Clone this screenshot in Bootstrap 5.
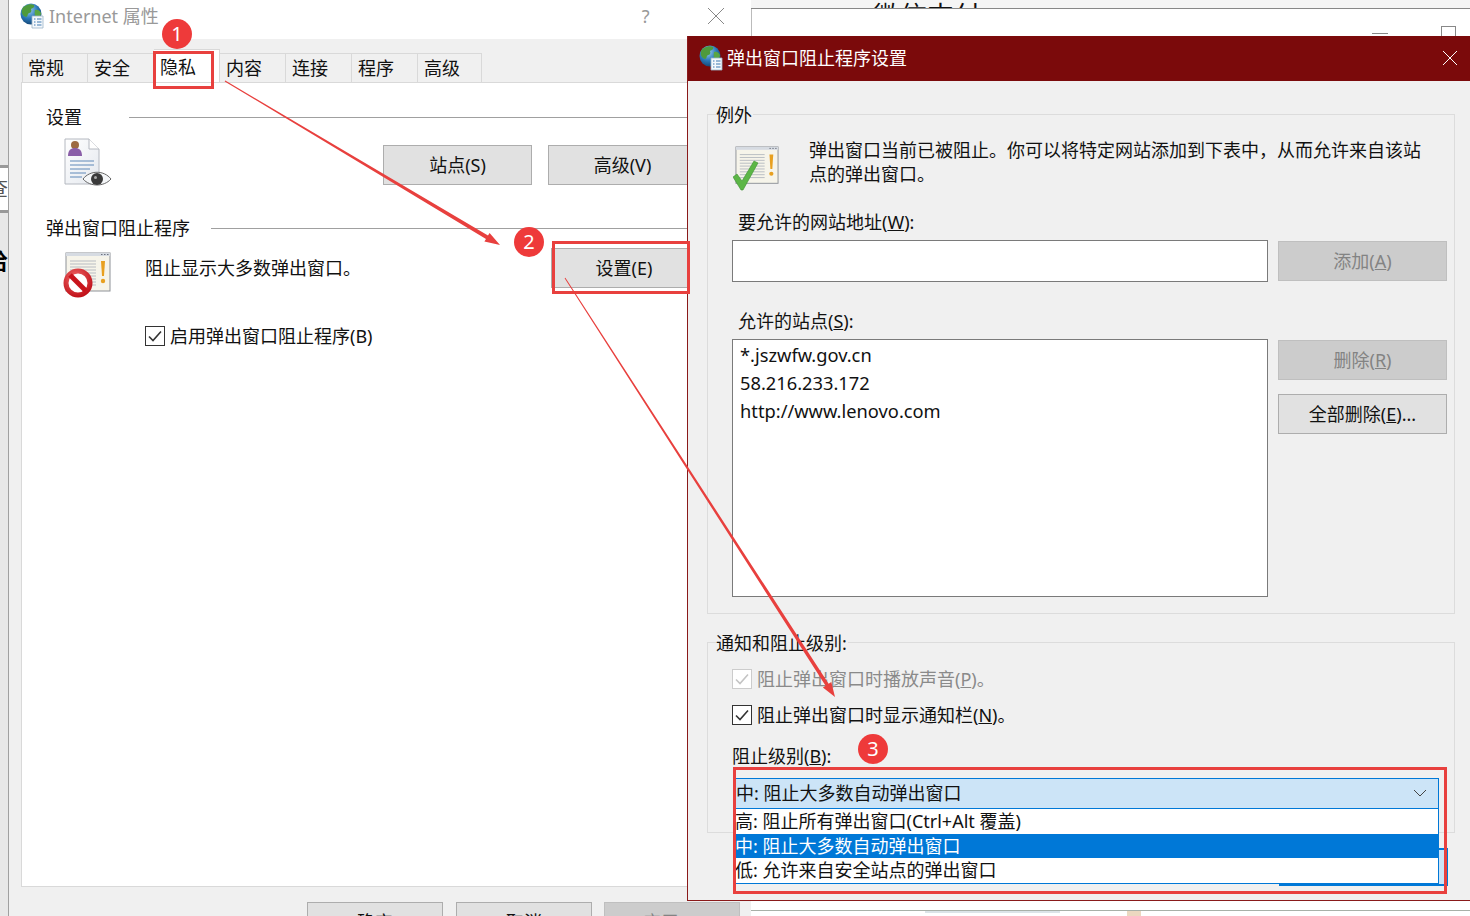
<!DOCTYPE html>
<html lang="zh-CN">
<head>
    <meta charset="UTF-8">
    <meta name="viewport" content="width=device-width, initial-scale=1.0">
    <title>Internet 属性</title>
    <link href="https://cdn.jsdelivr.net/npm/bootstrap@5.3.2/dist/css/bootstrap.min.css" rel="stylesheet">
    <style>
        html, body { height: 916px; overflow: hidden; }
        body { background: #fff; color: #111; font-family: "Noto Sans", "Noto Sans CJK SC", sans-serif; font-size: 18px; line-height: 24px; position: relative; width: 1470px; }

        /* what is behind the two dialogs */
        .back-left { position: absolute; left: 0; top: 0; width: 9px; height: 916px; background: #e8e8e8; border-right: 1px solid #a0a0a0; overflow: hidden; }
        .back-white { height: 48px; margin-top: 165px; background: #fff; border-top: 3px solid #999; border-bottom: 3px solid #999; font-size: 20px; padding-top: 9px; text-indent: -12px; white-space: nowrap; color: #555; }
        .back-bold { margin-top: 35px; font-size: 22px; font-weight: 700; text-indent: -14px; white-space: nowrap; color: #000; }
        .back-top { position: absolute; left: 751px; top: 0; right: 0; height: 9px; background: #f5f5f5; border-bottom: 1px solid #888; overflow: hidden; font-size: 27px; line-height: 27px; padding: 2px 0 0 122px; }
        .back-side { position: absolute; left: 751px; top: 9px; width: 1px; height: 30px; background: #bbb; }
        .back-min { position: absolute; left: 1372px; top: 33px; width: 16px; height: 1px; background: #888; }
        .back-max { position: absolute; left: 1441px; top: 26px; width: 15px; height: 11px; border: 1px solid #888; border-bottom: 0; }
        .back-foot { position: absolute; left: 751px; right: 0; top: 910px; height: 1px; background: #a8b0a8; }
        .back-blur { position: absolute; left: 925px; top: 911px; width: 135px; height: 2px; background: #dbe4e8; }
        .back-pic { position: absolute; left: 1127px; top: 911px; width: 14px; height: 5px; background: #ecd8c0; }

        /* Internet 属性 */
        .win-main { position: absolute; left: 9px; top: 0; width: 742px; height: 916px; background: #f0f0f0; overflow: hidden; }
        .main-title { height: 39px; background: #fff; padding: 0 0 7px 11px; color: #999; }
        .main-title .title-name { padding-left: 1px; }
        .main-title .help-mark { margin-left: 483px; width: 22px; color: #999; }
        .main-title .title-x { margin-left: 43px; }
        .main-tabs { margin: 14px 0 0 13px; border: 0; flex-wrap: nowrap; }
        .main-tabs .nav-link { width: 66px; height: 29px; margin: 0; padding: 2px 0 0 6px; color: #111; font-size: 18px; line-height: 24px; background: #f0f0f0; border: 1px solid #d9d9d9; border-bottom: 0; border-left-width: 0; border-radius: 0; }
        .main-tabs .nav-item:first-child .nav-link { border-left-width: 1px; padding-left: 5px; }
        .main-tabs .nav-item:last-child .nav-link { width: 64px; }
        .main-tabs .nav-link.active { width: 66px; height: 33px; margin-top: -4px; padding-top: 5px; background: #fff; color: #111; border-color: #d9d9d9; position: relative; z-index: 1; }
        .main-panel { height: 805px; margin: 0 11px 0 12px; background: #fff; border: 1px solid #d9d9d9; padding: 22px 0 0 24px; }
        .head-line { height: 24px; }
        .head-line .rule-line { flex: 1; height: 1px; background: #a0a0a0; }
        .head-a { margin-right: 47px; }
        .head-b { margin-right: 21px; }
        .main-row-a { height: 87px; padding-right: 42px; }
        .main-row-a .row-btns { margin-top: 16px; gap: 16px; }
        .main-row-a svg, .main-row-b svg { flex: none; }
        .icon-person { margin: 9px 0 0 18px; }
        .main-row-b { height: 65px; padding-right: 42px; margin-top: 8px; }
        .icon-stop { margin: 4px 0 0 17px; }
        .block-text { margin: 8px 0 0 34px; }
        .enable-row { margin: 13px 0 0 99px; }
        .win-btn { width: 149px; height: 40px; padding: 0; border: 1px solid #adadad; border-radius: 0; background: #e1e1e1; color: #111; font-size: 18px; line-height: 24px; }
        .win-btn.btn-narrow { width: 146px; }
        .win-btn.btn-off, .win-btn.btn-off:disabled { background: #cccccc; border-color: #bfbfbf; color: #838383; opacity: 1; }
        .main-foot { margin: 15px 0 0 298px; gap: 13px; }
        .main-foot .win-btn { width: 136px; flex: none; }
        .main-foot .win-btn.btn-off { margin-left: -1px; }

        .win-check { margin: 0 !important; width: 20px; height: 20px; flex: none; border: 1px solid #333; border-radius: 0 !important; background-color: #fff; }
        .win-check:checked { background-color: #fff; border-color: #333; background-size: 18px; background-image: url("data:image/svg+xml,%3csvg xmlns='http://www.w3.org/2000/svg' viewBox='0 0 18 18'%3e%3cpath fill='none' stroke='%23333' stroke-width='1.6' d='M3 9.5l4 4 8-9'/%3e%3c/svg%3e"); }
        .win-check:disabled { opacity: 1; border-color: #ccc; }
        .win-check.check-off:checked { border-color: #ccc; background-image: url("data:image/svg+xml,%3csvg xmlns='http://www.w3.org/2000/svg' viewBox='0 0 18 18'%3e%3cpath fill='none' stroke='%23c4c4c4' stroke-width='1.6' d='M3 9.5l4 4 8-9'/%3e%3c/svg%3e"); }

        /* 弹出窗口阻止程序设置 */
        .win-popup { position: absolute; left: 687px; top: 36px; width: 783px; height: 865px; background: #f0f0f0; border-left: 1px solid #8a1a1a; border-bottom: 1px solid #8a1a1a; overflow: hidden; }
        .popup-title { height: 45px; background: #7b0a0b; color: #fff; padding: 0 0 1px 11px; }
        .popup-title .title-x { margin-left: auto; margin-right: 12px; }
        .group-box { width: 748px; margin-left: 19px; border: 1px solid #dcdcdc; padding-left: 24px; position: relative; }
        .group-one { height: 500px; margin-top: 33px; }
        .group-two { height: 191px; margin-top: 28px; }
        .group-name { background: #f0f0f0; width: fit-content; margin: -13px 0 0 -16px; padding: 0 1px 0 0; height: 26px; line-height: 26px; }
        .allow-info { margin: 10px 0 0 1px; height: 60px; }
        .allow-icon { flex: none; margin-top: 8px; }
        .allow-info .allow-text { width: 620px; margin-left: 30px; }
        .sub-label { padding-left: 6px; height: 24px; }
        .label-first { margin-top: 12px; }
        .label-second { margin-top: 27px; }
        .box-row { gap: 10px; margin-top: 6px; }
        .entry-box { height: 42px; width: 536px; flex: none; border: 1px solid #7a7a7a; border-radius: 0; }
        .sites-box { height: 258px; width: 536px; flex: none; border: 1px solid #7a7a7a; background: #fff; padding: 1px 7px; font-size: 18.3px; line-height: 28px; }
        .side-btns { width: 169px; }
        .side-btns .win-btn { width: 169px; display: block; }
        .side-btns .side-first { margin-top: 1px; }
        .side-btns .side-next { margin-top: 14px; }
        .check-row { height: 20px; gap: 5px; }
        .check-row.text-off { color: #8a8a8a; }
        .check-one { margin-top: 13px; }
        .check-two { margin-top: 16px; }
        .level-label { margin-top: 19px; height: 24px; }
        .level-box { position: absolute; left: 27px; top: 135px; width: 704px; height: 32px; background: #cce4f7; border: 1px solid #0078d7; border-bottom-width: 2px; line-height: 29px; }
        .level-box svg { position: absolute; right: 11px; top: 10px; }
        .level-menu { position: absolute; left: 27px; top: 166px; width: 704px; height: 75px; min-width: 0; margin: 0; padding: 0; border: 1px solid #0078d7; border-top: 0; border-radius: 0; background: #fff; z-index: 3; }
        .level-menu .dropdown-item { height: 24.5px; padding: 0; line-height: 24px; color: #111; font-size: 18px; text-indent: -1px; }
        .level-menu .dropdown-item.active { background: #0078d7; color: #fff; }
        .ok-btn { display: block; width: 169px; height: 38px; margin: 15px 0 0 591px; background: #cce4f7; border: 2px solid #0078d7; border-radius: 0; padding: 0; }

        /* annotations */
        .mark-layer { position: absolute; left: 0; top: 0; z-index: 5; pointer-events: none; }
        .step-dot { position: absolute; z-index: 6; width: 30px; height: 30px; background: #ee3a3a; color: #fff; font-size: 20px; line-height: 29px; text-align: center; }
        .step-a { left: 162px; top: 19px; }
        .step-b { left: 514px; top: 227px; }
        .step-c { left: 858px; top: 734px; }
    </style>
</head>
<body>
    <svg width="0" height="0" class="position-absolute">
        <defs>
            <radialGradient id="globeFill" cx="40%" cy="30%" r="75%">
                <stop offset="0" stop-color="#9fd0f2"/>
                <stop offset=".55" stop-color="#2a78b8"/>
                <stop offset="1" stop-color="#12406e"/>
            </radialGradient>
            <linearGradient id="pageFill" x1="0" y1="0" x2="1" y2="1">
                <stop offset="0" stop-color="#ffffff"/>
                <stop offset="1" stop-color="#e4e8ee"/>
            </linearGradient>
            <radialGradient id="stopFill" cx="40%" cy="30%" r="80%">
                <stop offset="0" stop-color="#f26a6a"/>
                <stop offset="1" stop-color="#c01018"/>
            </radialGradient>
            <symbol id="globeIcon" viewBox="0 0 24 26">
                <circle cx="11" cy="11" r="10.5" fill="url(#globeFill)"/>
                <path d="M5 3c3-2 7-2 9-1 1 2-1 3-3 4 1 2 0 4-2 4-2 1-1 4-3 4-3-1-5-4-4-7 0-2 1-3 3-4z" fill="#4e9a3c"/>
                <path d="M15 7c3-1 5 1 6 3 0 3-2 5-4 6-2-2-3-6-2-9z" fill="#5aa644"/>
                <path d="M12 13h11v12H12z" fill="#f4f8fc" stroke="#9db4c8" stroke-width=".8"/>
                <path d="M14 16h1.500M17 16h4.500M14 19h1.500M17 19h4.500M14 22h1.500M17 22h4.500" stroke="#3c78b0" stroke-width="1"/>
            </symbol>
            <symbol id="alertPage" viewBox="0 0 46 46">
                <rect x="1" y="1" width="44" height="38" fill="#f6f4ea" stroke="#8e9298"/>
                <rect x="1" y="1" width="44" height="3" fill="#d6dbe2"/>
                <path d="M36 2.500h1.500M39 2.500h1.500M42 2.500h1.500" stroke="#6c7280"/>
                <path d="M5 9h26M5 12h26M5 15h26M5 18h26M5 21h26M5 24h26M5 27h26M5 30h26M5 33h26" stroke="#b8bcc2"/>
                <path d="M36 9h4l-1 15h-2z" fill="#e8a020"/>
                <circle cx="38" cy="29" r="2.200" fill="#e8a020"/>
            </symbol>
        </defs>
    </svg>

    <div class="back-left">
        <div class="back-white">查</div>
        <div class="back-bold">给</div>
    </div>
    <div class="back-top">微信支付</div>
    <div class="back-side"></div>
    <div class="back-min"></div>
    <div class="back-max"></div>
    <div class="back-foot"></div>
    <div class="back-blur"></div>
    <div class="back-pic"></div>

    <!-- Internet 属性 -->
    <div class="win-main">
        <div class="main-title d-flex align-items-center">
            <svg width="24" height="26" class="me-1"><use href="#globeIcon"/></svg>
            <span class="title-name">Internet 属性</span>
            <span class="help-mark">?</span>
            <svg class="title-x" width="18" height="18" viewBox="0 0 18 18"><path d="M1 1l16 16M17 1L1 17" stroke="#888" fill="none"/></svg>
        </div>
        <ul class="nav nav-tabs main-tabs">
            <li class="nav-item"><a class="nav-link" href="#">常规</a></li>
            <li class="nav-item"><a class="nav-link" href="#">安全</a></li>
            <li class="nav-item"><a class="nav-link active" href="#">隐私</a></li>
            <li class="nav-item"><a class="nav-link" href="#">内容</a></li>
            <li class="nav-item"><a class="nav-link" href="#">连接</a></li>
            <li class="nav-item"><a class="nav-link" href="#">程序</a></li>
            <li class="nav-item"><a class="nav-link" href="#">高级</a></li>
        </ul>
        <div class="main-panel">
            <div class="head-line d-flex align-items-center">
                <span class="head-a">设置</span>
                <span class="rule-line"></span>
            </div>
            <div class="main-row-a d-flex align-items-start">
                <svg class="icon-person" width="48" height="50" viewBox="0 0 48 50">
                    <path d="M1 1h24l10 10v35H1z" fill="url(#pageFill)" stroke="#b4b8c0"/>
                    <path d="M25 1v10h10" fill="#fff" stroke="#b4b8c0"/>
                    <circle cx="11" cy="7" r="4" fill="#9c6a42"/>
                    <path d="M4 18c0-6 3-8 7-8s7 2 7 8z" fill="#8a5ea8"/>
                    <path d="M6 23h24M6 27h24M6 31h20M6 35h16M6 39h12" stroke="#5e88b8"/>
                    <path d="M19 41c7-9 21-9 28 0-7 8-21 8-28 0z" fill="#f4f6f8" stroke="#666"/>
                    <circle cx="33" cy="41" r="6" fill="#3a3a3a"/>
                    <circle cx="31.500" cy="39.500" r="1.500" fill="#aaa"/>
                </svg>
                <div class="row-btns d-flex ms-auto">
                    <button type="button" class="btn win-btn">站点(S)</button>
                    <button type="button" class="btn win-btn">高级(V)</button>
                </div>
            </div>
            <div class="head-line d-flex align-items-center">
                <span class="head-b">弹出窗口阻止程序</span>
                <span class="rule-line"></span>
            </div>
            <div class="main-row-b d-flex align-items-start">
                <svg class="icon-stop" width="48" height="46" viewBox="0 0 48 46">
                    <use href="#alertPage" x="2" y="0" width="46" height="46"/>
                    <circle cx="15" cy="31" r="12" fill="#fff" stroke="url(#stopFill)" stroke-width="5"/>
                    <path d="M7 23l16 16" stroke="#c8141c" stroke-width="5"/>
                </svg>
                <span class="block-text">阻止显示大多数弹出窗口。</span>
                <button type="button" class="btn win-btn btn-narrow ms-auto">设置(E)</button>
            </div>
            <div class="check-row enable-row d-flex align-items-center">
                <input class="form-check-input win-check" type="checkbox" checked id="enableBlock">
                <label for="enableBlock">启用弹出窗口阻止程序(B)</label>
            </div>
        </div>
        <div class="main-foot d-flex">
            <button type="button" class="btn win-btn">确定</button>
            <button type="button" class="btn win-btn">取消</button>
            <button type="button" class="btn win-btn btn-off" disabled>应用(A)</button>
        </div>
    </div>

    <!-- 弹出窗口阻止程序设置 -->
    <div class="win-popup">
        <div class="popup-title d-flex align-items-center">
            <svg width="24" height="26" class="me-1"><use href="#globeIcon"/></svg>
            <span>弹出窗口阻止程序设置</span>
            <svg class="title-x" width="16" height="16" viewBox="0 0 16 16"><path d="M1 1l14 14M15 1L1 15" stroke="#fff" fill="none"/></svg>
        </div>

        <div class="group-box group-one">
            <div class="group-name">例外</div>
            <div class="allow-info d-flex">
                <svg class="allow-icon" width="46" height="46" viewBox="0 0 46 46">
                    <use href="#alertPage" x="2" y="0" width="44" height="44"/>
                    <path d="M0 31l4-3 5 7L21 15l4 2-15 27h-2z" fill="#5cb646" stroke="#3c9030" stroke-width=".6"/>
                </svg>
                <div class="allow-text">弹出窗口当前已被阻止。你可以将特定网站添加到下表中，从而允许来自该站点的弹出窗口。</div>
            </div>
            <div class="sub-label label-first">要允许的网站地址(<u>W</u>):</div>
            <div class="box-row d-flex">
                <input type="text" class="form-control entry-box">
                <div class="side-btns"><button type="button" class="btn win-btn btn-off side-first" disabled>添加(<u>A</u>)</button></div>
            </div>
            <div class="sub-label label-second">允许的站点(<u>S</u>):</div>
            <div class="box-row d-flex">
                <div class="sites-box">
                    <div>*.jszwfw.gov.cn</div>
                    <div>58.216.233.172</div>
                    <div>http://www.lenovo.com</div>
                </div>
                <div class="side-btns">
                    <button type="button" class="btn win-btn btn-off side-first" disabled>删除(<u>R</u>)</button>
                    <button type="button" class="btn win-btn side-next">全部删除(<u>E</u>)...</button>
                </div>
            </div>
        </div>

        <div class="group-box group-two">
            <div class="group-name">通知和阻止级别:</div>
            <div class="check-row check-one text-off d-flex align-items-center">
                <input class="form-check-input win-check check-off" type="checkbox" checked disabled>
                <span>阻止弹出窗口时播放声音(<u>P</u>)。</span>
            </div>
            <div class="check-row check-two d-flex align-items-center">
                <input class="form-check-input win-check" type="checkbox" checked id="showBar">
                <label for="showBar">阻止弹出窗口时显示通知栏(<u>N</u>)。</label>
            </div>
            <div class="level-label">阻止级别(<u>B</u>):</div>
            <div class="level-box">中: 阻止大多数自动弹出窗口
                <svg width="14" height="8" viewBox="0 0 14 8"><path d="M1 1l6 6 6-6" stroke="#444" fill="none"/></svg>
            </div>
            <div class="dropdown-menu show level-menu">
                <a class="dropdown-item" href="#">高: 阻止所有弹出窗口(Ctrl+Alt 覆盖)</a>
                <a class="dropdown-item active" href="#">中: 阻止大多数自动弹出窗口</a>
                <a class="dropdown-item" href="#">低: 允许来自安全站点的弹出窗口</a>
            </div>
        </div>
        <button type="button" class="btn ok-btn" aria-label="确定"></button>
    </div>

    <!-- 红框和箭头 -->
    <svg class="mark-layer" width="1470" height="916" viewBox="0 0 1470 916">
        <g fill="none" stroke="#e8403e" stroke-width="3">
            <rect x="154.500" y="52.500" width="58" height="35"/>
            <rect x="553.500" y="242.500" width="135" height="50"/>
            <rect x="734.500" y="768.500" width="711" height="124"/>
        </g>
        <g fill="#e8403e">
            <polygon points="225.300,80.600 488,235.600 489.600,233 500,245 484.400,241.600 486,239 224.700,81.400"/>
            <polygon points="565.400,277.800 828.600,683.800 831.300,682.100 835,697 822.900,687.500 825.600,685.800 564.600,278.200"/>
        </g>
    </svg>
    <span class="step-dot step-a rounded-circle">1</span>
    <span class="step-dot step-b rounded-circle">2</span>
    <span class="step-dot step-c rounded-circle">3</span>

    <script src="https://cdn.jsdelivr.net/npm/bootstrap@5.3.2/dist/js/bootstrap.bundle.min.js"></script>
</body>
</html>
